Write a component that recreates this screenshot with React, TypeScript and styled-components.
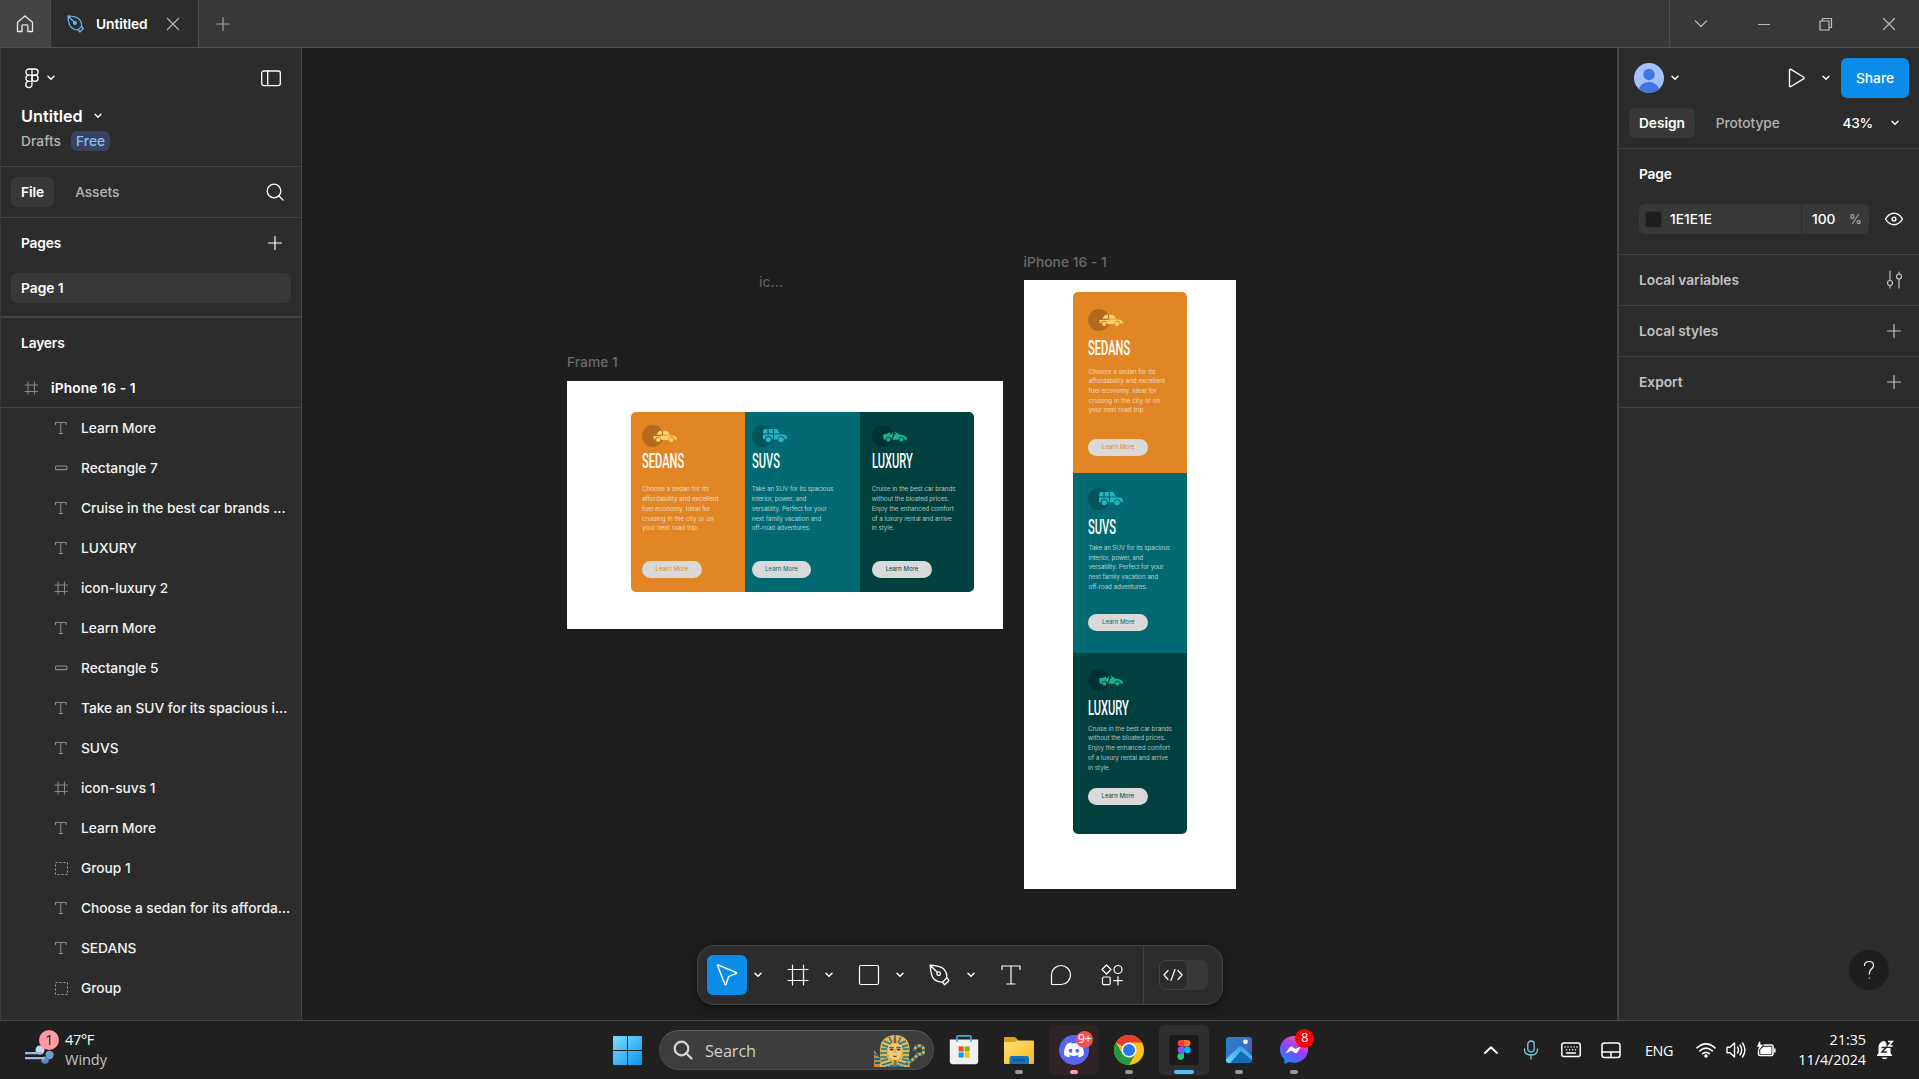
import React from "react";
import styled, { createGlobalStyle } from "styled-components";

const GlobalStyle = createGlobalStyle`
  *, *::before, *::after { box-sizing: border-box; }
  html, body { margin: 0; padding: 0; background: #1e1e1e; overflow: hidden; }
  body { font-family: Inter, "Liberation Sans", sans-serif; font-size: 13.75px; color: #fff; }
  svg { display: block; flex: none; }
`;

const line = "#444444";
const panel = "#2c2c2c";

const Screen = styled.div`
  width: 1919px;
  height: 1079px;
  display: flex;
  flex-direction: column;
  overflow: hidden;
`;

/* ---------- title bar ---------- */
const TitleBar = styled.header`
  height: 48px;
  flex: none;
  display: flex;
  background: #383838;
  border-bottom: 1px solid #4e4e4e;
`;
const HomeTab = styled.div`
  width: 51px;
  display: flex;
  align-items: center;
  justify-content: center;
  background: #444;
  border-right: 1px solid #4e4e4e;
`;
const FileTab = styled.div`
  width: 148px;
  display: flex;
  align-items: center;
  padding-left: 16px;
  background: ${panel};
  border-right: 1px solid #4e4e4e;
  font-weight: 600;
  letter-spacing: -0.005em;
  & > span { width: 70px; margin-left: 11px; }
`;
const NewTab = styled.div`
  width: 48px;
  display: flex;
  align-items: center;
  justify-content: center;
`;
const WindowControls = styled.div`
  margin-left: auto;
  width: 250px;
  border-left: 1px solid #4e4e4e;
  display: grid;
  grid-template-columns: 62px 63px 62px 63px;
  align-items: center;
  justify-items: center;
`;

/* ---------- workspace ---------- */
const Workspace = styled.div`
  flex: 1;
  min-height: 0;
  display: flex;
  border-bottom: 1px solid #464646;
`;
const LeftPanel = styled.aside`
  width: 302px;
  flex: none;
  background: ${panel};
  border-left: 1px solid #3a3a3a;
  border-right: 1px solid ${line};
  display: flex;
  flex-direction: column;
`;
const FileHeader = styled.section`
  height: 119px;
  border-bottom: 1px solid ${line};
  padding: 14px 20px 0;
`;
const MenuRow = styled.div`
  height: 32px;
  display: flex;
  align-items: center;
  gap: 8px;
  padding-left: 4px;
  & > :last-child { margin-left: auto; }
`;
const FileName = styled.div`
  margin-top: 12px;
  height: 20px;
  display: flex;
  align-items: center;
  gap: 11px;
  font-size: 16.25px;
  font-weight: 600;
`;
const FileMeta = styled.div`
  margin-top: 5px;
  height: 20px;
  display: flex;
  align-items: center;
  gap: 10px;
  color: #b3b3b3;
  font-weight: 480;
  letter-spacing: 0.005em;
`;
const FreeBadge = styled.span`
  height: 20px;
  width: 39px;
  border-radius: 6px;
  background: #394360;
  color: #7cc4f8;
  display: flex;
  align-items: center;
  justify-content: center;
`;
const TabRow = styled.div`
  height: 51px;
  border-bottom: 1px solid ${line};
  display: flex;
  align-items: center;
  padding: 0 16px 0 10px;
  & > svg { margin-left: auto; }
`;
const Tab = styled.div<{ $active?: boolean }>`
  height: 30px;
  padding: 0 10px;
  border-radius: 6px;
  display: flex;
  align-items: center;
  margin-right: 11px;
  letter-spacing: -0.005em;
  background: ${(p) => (p.$active ? "#383838" : "transparent")};
  color: ${(p) => (p.$active ? "#fff" : "#b3b3b3")};
  font-weight: ${(p) => (p.$active ? 600 : 480)};
`;
const SectionHead = styled.div`
  height: 50px;
  padding: 0 16px 0 20px;
  display: flex;
  align-items: center;
  justify-content: space-between;
  font-weight: 600;
  letter-spacing: -0.01em;
`;
const PageItem = styled.div`
  margin: 5px 10px 13px;
  height: 30px;
  border-radius: 6px;
  background: #383838;
  padding-left: 10px;
  display: flex;
  align-items: center;
  font-weight: 600;
`;
const Layers = styled.section`
  border-top: 2px solid ${line};
`;
const LayerRow = styled.div<{ $root?: boolean }>`
  height: 40px;
  display: flex;
  align-items: center;
  padding-left: ${(p) => (p.$root ? 20 : 50)}px;
  gap: 10px;
  border-bottom: ${(p) => (p.$root ? `1px solid ${line}` : "0")};
  font-weight: ${(p) => (p.$root ? 600 : 500)};
  letter-spacing: ${(p) => (p.$root ? "0.01em" : "-0.002em")};
  color: ${(p) => (p.$root ? "#fff" : "#f2f2f2")};
  white-space: nowrap;
`;

/* ---------- canvas ---------- */
const Canvas = styled.main`
  flex: 1;
  position: relative;
  background: #1e1e1e;
  overflow: hidden;
`;
const CanvasLabel = styled.div<{ $x: number; $y: number; $dim?: boolean }>`
  position: absolute;
  left: ${(p) => p.$x}px;
  top: ${(p) => p.$y}px;
  line-height: 20px;
  font-weight: 480;
  letter-spacing: 0.05px;
  color: ${(p) => (p.$dim ? "#5a5a5a" : "#6a6a6a")};
  white-space: nowrap;
`;
const Artboard = styled.div<{ $x: number; $y: number; $w: number; $h: number; $pad: string }>`
  position: absolute;
  left: ${(p) => p.$x}px;
  top: ${(p) => p.$y}px;
  width: ${(p) => p.$w}px;
  height: ${(p) => p.$h}px;
  padding: ${(p) => p.$pad};
  background: #fff;
`;
const CardSet = styled.div<{ $column?: boolean }>`
  display: grid;
  grid-template-columns: ${(p) => (p.$column ? "minmax(0, 1fr)" : "repeat(3, minmax(0, 1fr))")};
  grid-template-rows: ${(p) => (p.$column ? "repeat(3, minmax(0, 1fr))" : "minmax(0, 1fr)")};
  width: ${(p) => (p.$column ? 114.3 : 343)}px;
  height: ${(p) => (p.$column ? 542 : 180.8)}px;
  border-radius: 5px;
  overflow: hidden;
`;
const Card = styled.article<{ $bg: string; $left: number; $top: number }>`
  background: ${(p) => p.$bg};
  padding: ${(p) => p.$top}px 0 0 ${(p) => p.$left}px;
`;
const CardTitle = styled.div<{ $gap: number }>`
  margin-top: ${(p) => p.$gap}px;
  height: 14px;
  font: 500 20.4px/14px Roboto, "Liberation Sans", sans-serif;
  transform: scaleX(0.545);
  transform-origin: 0 50%;
  white-space: nowrap;
`;
const CardText = styled.div<{ $gap: number; $shift: number; $spacing: number }>`
  margin: ${(p) => p.$gap}px 0 0 ${(p) => p.$shift}px;
  height: 48.4px;
  font-size: 6.3px;
  line-height: 9.68px;
  letter-spacing: ${(p) => p.$spacing}px;
  color: rgba(255, 255, 255, 0.68);
  white-space: nowrap;
`;
const CardButton = styled.div<{ $gap: number; $color: string; $shift: number }>`
  margin: ${(p) => p.$gap}px 0 0 ${(p) => p.$shift}px;
  width: 59.6px;
  height: 16.8px;
  border-radius: 9px;
  background: #d9d9d9;
  color: ${(p) => p.$color};
  font-size: 6px;
  line-height: 16px;
  text-align: center;
`;

/* ---------- toolbar ---------- */
const Toolbar = styled.div`
  position: absolute;
  left: 395px;
  top: 897px;
  width: 526px;
  height: 60px;
  border-radius: 17px;
  background: ${panel};
  border: 1px solid #434343;
  box-shadow: 0 3px 8px rgba(0, 0, 0, 0.5);
  display: flex;
  align-items: center;
  padding-left: 9px;
`;
const ToolGroup = styled.div`
  width: 71px;
  flex: none;
  display: flex;
  align-items: center;
`;
const Tool = styled.div<{ $active?: boolean }>`
  width: 40px;
  height: 40px;
  flex: none;
  border-radius: 6px;
  background: ${(p) => (p.$active ? "#0c8ce9" : "transparent")};
  display: flex;
  align-items: center;
  justify-content: center;
`;
const ToolMenu = styled.div`
  width: 21px;
  display: flex;
  justify-content: center;
`;
const SingleTools = styled.div`
  display: flex;
  gap: 10.3px;
`;
const ModeArea = styled.div`
  height: 58px;
  margin-left: 11px;
  padding-left: 15px;
  border-left: 1px solid #434343;
  display: flex;
  align-items: center;
`;
const ModeTrack = styled.div`
  width: 49px;
  height: 30px;
  border-radius: 7px;
  background: #383838;
`;
const ModeKnob = styled.div`
  width: 29px;
  height: 30px;
  border-radius: 7px;
  background: ${panel};
  border: 1px solid #424242;
  display: flex;
  align-items: center;
  justify-content: center;
`;

/* ---------- right panel ---------- */
const RightPanel = styled.aside`
  position: relative;
  width: 302px;
  flex: none;
  background: ${panel};
  border-left: 2px solid ${line};
`;
const UserRow = styled.div`
  height: 60px;
  display: flex;
  align-items: center;
  padding: 0 10px 0 15px;
`;
const Spacer = styled.div<{ $w?: number }>`
  width: ${(p) => p.$w ?? 0}px;
  flex: ${(p) => (p.$w ? "none" : "1")};
`;
const ShareButton = styled.div`
  width: 68px;
  height: 40px;
  border-radius: 6px;
  background: #0c8ce9;
  display: flex;
  align-items: center;
  justify-content: center;
  font-weight: 500;
`;
const ModeTabs = styled.div`
  height: 41px;
  padding: 0 20px 11px 10px;
  border-bottom: 1px solid ${line};
  display: flex;
  align-items: center;
`;
const Zoom = styled.div`
  margin-left: auto;
  display: flex;
  align-items: center;
  gap: 18px;
  font-weight: 500;
  letter-spacing: -0.02em;
`;
const PageSection = styled.section`
  height: 106px;
  border-bottom: 1px solid ${line};
`;
const FillRow = styled.div`
  margin-top: 5px;
  padding: 0 11px 0 20px;
  display: flex;
  align-items: center;
  justify-content: space-between;
`;
const FillField = styled.div`
  width: 230px;
  height: 30px;
  border-radius: 6px;
  background: #383838;
  display: grid;
  grid-template-columns: 163px 36px 31px;
  align-items: center;
  font-weight: 500;
  overflow: hidden;
`;
const FillHex = styled.div`
  height: 30px;
  display: flex;
  align-items: center;
  gap: 8px;
  padding-left: 6px;
  border-right: 1px solid #2c2c2c;
`;
const Swatch = styled.span`
  width: 17px;
  height: 17px;
  border-radius: 3px;
  background: #1e1e1e;
  border: 1px solid #2f2f2f;
`;
const FillPct = styled.div<{ $muted?: boolean }>`
  padding-left: ${(p) => (p.$muted ? 11 : 10)}px;
  color: ${(p) => (p.$muted ? "#a9a9a9" : "#fff")};
  font-size: ${(p) => (p.$muted ? 13 : 13.75)}px;
`;
const PropertyRow = styled.div`
  height: 51px;
  padding: 0 15px 0 20px;
  border-bottom: 1px solid ${line};
  display: flex;
  align-items: center;
  justify-content: space-between;
  color: #c2c2c2;
  font-weight: 570;
  letter-spacing: 0;
`;
const HelpButton = styled.div`
  position: absolute;
  right: 30px;
  bottom: 30px;
  width: 40px;
  height: 40px;
  border-radius: 50%;
  background: #1e1e1e;
  display: flex;
  align-items: center;
  justify-content: center;
`;

/* ---------- taskbar ---------- */
const Taskbar = styled.footer`
  height: 58px;
  flex: none;
  background: #202020;
  display: flex;
  align-items: center;
  font-family: "Open Sans", "Noto Sans", sans-serif;
`;
const Weather = styled.div`
  width: 613px;
  padding-left: 24px;
  display: flex;
  align-items: center;
  gap: 9px;
`;
const WeatherText = styled.div`
  font-size: 14.6px;
  line-height: 20px;
  letter-spacing: -0.4px;
  padding-bottom: 2px;
  & > div:last-child { color: #c4c4c4; letter-spacing: -0.1px; }
`;
const SearchBox = styled.div`
  margin-left: 17px;
  width: 275px;
  height: 40px;
  border-radius: 20px;
  background: #3d3d3d;
  border: 1px solid #4b4b4b;
  border-top-color: #5c5c5c;
  display: flex;
  align-items: center;
  padding: 0 8px 0 13px;
  font-size: 16.4px;
  letter-spacing: -0.15px;
  color: #d0d0d0;
  & > span { flex: 1; margin-left: 12px; }
`;
const Apps = styled.div`
  margin-left: 5px;
  display: flex;
  gap: 5px;
`;
const AppTile = styled.div<{ $bg?: string }>`
  position: relative;
  width: 50px;
  height: 50px;
  border-radius: 6px;
  background: ${(p) => p.$bg ?? "transparent"};
  display: flex;
  align-items: center;
  justify-content: center;
`;
const Indicator = styled.span<{ $w: number; $c: string }>`
  position: absolute;
  bottom: 1px;
  left: calc(50% - ${(p) => p.$w / 2}px);
  width: ${(p) => p.$w}px;
  height: 4px;
  border-radius: 2px;
  background: ${(p) => p.$c};
`;
const Badge = styled.span<{ $bg: string; $size: number; $x: number; $y: number; $fg: string; $fs: number }>`
  position: absolute;
  left: ${(p) => p.$x}px;
  top: ${(p) => p.$y}px;
  width: ${(p) => p.$size}px;
  height: ${(p) => p.$size}px;
  border-radius: 50%;
  background: ${(p) => p.$bg};
  color: ${(p) => p.$fg};
  font-size: ${(p) => p.$fs}px;
  line-height: ${(p) => p.$size - 1}px;
  text-align: center;
  letter-spacing: -0.5px;
`;
const WeatherIcon = styled.div`
  position: relative;
  width: 32px;
  height: 34px;
`;
const Tray = styled.div`
  margin-left: auto;
  height: 58px;
  display: grid;
  grid-template-columns: 40px 40px 40px 40px 60px 30px 30px 30px 85px 53px;
  align-items: center;
  justify-items: center;
  font-size: 14.4px;
  letter-spacing: -0.4px;
`;
const Language = styled.span`
  padding-right: 4px;
`;
const Clock = styled.div`
  justify-self: end;
  text-align: right;
  line-height: 20px;
  white-space: nowrap;
  letter-spacing: -0.05px;
`;
const Bell = styled.div`
  justify-self: start;
  padding-left: 10px;
`;

/* ---------- icons ---------- */
const Stroke = ({ w, h, d, c = "#fff", s = 1.2, children }: { w: number; h: number; d?: string; c?: string; s?: number; children?: React.ReactNode }) => (
  <svg width={w} height={h} viewBox={`0 0 ${w} ${h}`} fill="none" stroke={c} strokeWidth={s} strokeLinecap="round" strokeLinejoin="round">
    {d && <path d={d} />}
    {children}
  </svg>
);
const Chevron = ({ s = 1.4 }: { s?: number }) => <Stroke w={8} h={6} s={s} d="M1 1.3 4 4.3 7 1.3" />;
const Plus = ({ c = "#fff" }: { c?: string }) => <Stroke w={20} h={20} c={c} d="M10 3.5v13M3.5 10h13" />;
const penPath = "M1.2 1.2C6 1.500 11.500 2.200 14.500 4.800Q18.200 8.500 17.800 13.800L13.500 18.200Q7.500 18 4.500 14.500Q1.800 11 1.200 1.200zM17.800 13.800l2.200 2.700-4.300 4.200-2.200-2.500M1.200 1.200 8.300 8.300";
const Pen = () => (
  <Stroke w={22} h={22} s={1.3} d={penPath}>
    <circle cx="9.7" cy="9.7" r="1.8" />
  </Stroke>
);

const GridIcon = () => <Stroke w={20} h={20} c="#858585" s={1.1} d="M7 4v12M13.5 4v12M4 7h12.5M4 13.5h12.5" />;
const TextIcon = () => <Stroke w={20} h={20} c="#8c8c8c" s={1.1} d="M4.5 6.5V4.5h10.6v2M9.8 4.5v11M8 15.5h3.6" />;
const RectIcon = () => (
  <Stroke w={20} h={20} c="#8c8c8c" s={1.1}>
    <rect x="4.5" y="8" width="11.4" height="3.6" rx="1" />
  </Stroke>
);
const GroupIcon = () => (
  <svg width="20" height="20" viewBox="0 0 20 20" fill="none" stroke="#a2a2a2" strokeWidth="1" strokeDasharray="2 2">
    <path d="M4.5 4.5h12M16.5 4.5v12M16.5 16.5h-12M4.5 16.5v-12" />
  </svg>
);
const layerIcons = { grid: GridIcon, text: TextIcon, rect: RectIcon, group: GroupIcon };

const layers: [keyof typeof layerIcons, string][] = [
  ["text", "Learn More"],
  ["rect", "Rectangle 7"],
  ["text", "Cruise in the best car brands ..."],
  ["text", "LUXURY"],
  ["grid", "icon-luxury 2"],
  ["text", "Learn More"],
  ["rect", "Rectangle 5"],
  ["text", "Take an SUV for its spacious i..."],
  ["text", "SUVS"],
  ["grid", "icon-suvs 1"],
  ["text", "Learn More"],
  ["group", "Group 1"],
  ["text", "Choose a sedan for its afforda..."],
  ["text", "SEDANS"],
  ["group", "Group"],
];

type Kind = "sedan" | "suv" | "luxury";
const CarIcon = ({ kind }: { kind: Kind }) => (
  <svg width="36" height="22" viewBox="0 0 36 22">
    <circle cx="10.9" cy="11" r="10.9" fill="#000" fillOpacity={kind === "luxury" ? 0.25 : 0.2} />
    {kind === "sedan" && (
      <g fill="#ffd06b">
        <path d="M14.500 9.800 16.500 6.500q.5-.8 1.500-.8h2v4.100zM21 5.700h3q1 0 1.700.7l2.600 3.400H21z" />
        <path d="M10.900 11h9v3.800h-1q-.3-3-2.900-3t-2.900 2.800l-2-.5.8-1.500zM20.900 10.400h9.600q4.200.8 4.300 2.800v1.300h-2.700q-.3-3-2.900-3t-2.900 3.500h-6.800v-4.600z" />
        <circle cx="16.200" cy="14.700" r="2.200" />
        <circle cx="29.100" cy="14.700" r="2.200" />
      </g>
    )}
    {kind === "suv" && (
      <g fill="#22b4c2">
        <path d="M11 8.500V6q.3-2 2-2h2.500v4.500zM16.600 4h4.200v4.500h-4.200zM22 4h2.300q1 0 1.600 1l1.700 3.500H22z" />
        <path d="M11 9.500h10v5h-1.100q-.5-3.400-3.600-3.400t-3.600 3.400L11 14zM22 9.500h8.800q4 .4 4.100 2.200v2.300h-2.300q-.5-3-3.600-3t-3.600 3.500H22z" />
        <circle cx="16.300" cy="14.600" r="2.700" />
        <circle cx="29" cy="14.600" r="2.700" />
      </g>
    )}
    {kind === "luxury" && (
      <g fill="#18b08f">
        <path d="M11 9.600 16 8.500l1.200-.9 1 .4-.4 1.500 2.100-.7.4-1.200.8.3-.5 3.600-1.100 2.700q-.8-2.700-3.500-2.400-2.400.4-2.400 3l-1.800-.3z" />
        <path d="M20.400 14.800 22 10.600l1.900-2.100-1.500-1.200.6-.7 4.200 2.800q7.300.5 7.800 4v1.400h-2.600q-.4-3-3-3t-3 3z" />
        <circle cx="16.400" cy="14.600" r="2.100" />
        <circle cx="29.300" cy="14.600" r="2.100" />
      </g>
    )}
  </svg>
);

const cars: Record<Kind, { title: string; color: string; lines: string[]; spacing: number }> = {
  sedan: {
    title: "SEDANS",
    color: "#e28625",
    lines: ["Choose a sedan for its", "affordability and excellent", "fuel economy. Ideal for", "cruising in the city or on", "your next road trip."],
    spacing: 0,
  },
  suv: {
    title: "SUVS",
    color: "#006971",
    lines: ["Take an SUV for its spacious", "interior, power, and", "versatility. Perfect for your", "next family vacation and", "off-road adventures."],
    spacing: -0.13,
  },
  luxury: {
    title: "LUXURY",
    color: "#004140",
    lines: ["Cruise in the best car brands", "without the bloated prices.", "Enjoy the enhanced comfort", "of a luxury rental and arrive", "in style."],
    spacing: -0.07,
  },
};

type CarCardProps = { kind: Kind; left: number; top: number; head: number; text: number; button: number; shift?: number; btnShift?: number };
const CarCard = ({ kind, left, top, head, text, button, shift = 0, btnShift = 0 }: CarCardProps) => {
  const car = cars[kind];
  return (
    <Card $bg={car.color} $left={left} $top={top}>
      <CarIcon kind={kind} />
      <CardTitle $gap={head - top - 22}>{car.title}</CardTitle>
      <CardText $gap={text - head - 14} $shift={shift} $spacing={car.spacing}>
        {car.lines.map((t) => (
          <div key={t}>{t}</div>
        ))}
      </CardText>
      <CardButton $gap={button - text - 48.4} $color={car.color} $shift={btnShift}>Learn More</CardButton>
    </Card>
  );
};

const Pharaoh = () => (
  <svg width="52" height="33" viewBox="0 0 52 33">
    <path d="M1 16 7 24l4 9H1z" fill="#c98b32" />
    <path d="M1 20l5 2M1 25h7M2 29h8" stroke="#176a85" strokeWidth="1.8" />
    <path d="M7 33Q8 27 7 22 6 9 11 5q5-4 11-4 7 0 11 4 5 5 3 17-1 6 1 11z" fill="#e2b553" />
    <path d="M11 7l7 3M9 11l6 2M8 15h6M7 19h7M7 23h7M8 27l7-2M33 7l-7 3M35 11l-6 2M36 15h-6M36 19h-6M36 23h-6M36 27l-7-2M16 3l3 6M28 3l-3 6M9 31l10-3M35 31l-10-3M22 1v5" stroke="#1b7894" strokeWidth="1.500" />
    <path d="M15 12q7-5 14 0l-1 9q-2 5-6 6-4-1-6-6z" fill="#f1cd78" />
    <path d="M16 14q2-2 5 0M23 14q3-2 5 0M20 22q2 1 4 0" stroke="#573a1b" fill="none" />
    <ellipse cx="18.700" cy="15.600" rx="1.800" ry="1" fill="#24323a" />
    <ellipse cx="25.600" cy="15.600" rx="1.800" ry="1" fill="#24323a" />
    <path d="M22 15v4" stroke="#c98f3d" />
    <path d="M22 4q2 1 1 5h-2q-1-4 1-5" fill="#c63b24" />
    <path d="M12 33q10-7 20 0z" fill="#1b7894" />
    <path d="M15 32q7-4 14 0" stroke="#e2b553" fill="none" />
    <path d="M20.700 26h2.800v6h-2.800z" fill="#a86b25" />
    <path d="M33 30q8-4 12-10 6 1 6-4-1-5-6-4-3 1-4 5" stroke="#d9ad50" strokeWidth="3" fill="none" />
    <path d="M33 30q8-4 12-10 6 1 6-4-1-5-6-4-3 1-4 5" stroke="#1b7894" strokeWidth="3" strokeDasharray="2 2.600" fill="none" />
  </svg>
);

const StoreIcon = () => (
  <svg width="30" height="30" viewBox="0 0 30 30">
    <path d="M.8 4.500h28.400V26q0 3.200-3.200 3.200H4Q.8 29.200.8 26z" fill="#f0f0f0" />
    <path d="M8 7V1.800Q8 .9 8.900.9h12.200q.9 0 .9.9V7" fill="none" stroke="#2bb5ef" strokeWidth="1.600" />
    <path d="M9.600 11.400h5.100v5.100H9.600z" fill="#f25022" />
    <path d="M15.600 11.400h5.100v5.100h-5.100z" fill="#7fba00" />
    <path d="M9.600 17.400h5.100v5.100H9.600z" fill="#00a4ef" />
    <path d="M15.600 17.400h5.100v5.100h-5.100z" fill="#ffb900" />
  </svg>
);
const FolderIcon = () => (
  <svg width="30" height="28" viewBox="0 0 30 28">
    <defs>
      <linearGradient id="fold" x1="0" y1="0" x2="1" y2="1"><stop stopColor="#ffe07a" /><stop offset="1" stopColor="#f9b916" /></linearGradient>
    </defs>
    <path d="M0 7V2Q0 1 1 1h9q1 0 2 1l2 2v4z" fill="#dfa00f" />
    <path d="M0 6h10q1.500 0 2.500-1l.8-.6H29q1 0 1 1V27q0 .9-1 .9H1q-1 0-1-1z" fill="url(#fold)" />
    <path d="M5.500 28v-6q0-2 2-2H23q2 0 2 2v6z" fill="#1273bd" />
    <path d="M9 24h12" stroke="#0c4d87" strokeWidth="1.400" />
  </svg>
);
const DiscordIcon = () => (
  <svg width="30" height="30" viewBox="0 0 30 30">
    <circle cx="15" cy="15" r="15" fill="#5865f2" />
    <g transform="translate(5 5) scale(.83)">
      <path fill="#fff" d="M20.300 4.400A19.800 19.800 0 0 0 15.400 2.900l-.6 1.300a18.300 18.300 0 0 0-5.500 0l-.6-1.300c-1.700.3-3.400.8-4.900 1.500C.5 9-.3 13.600.1 18.100a19.900 19.900 0 0 0 6 3l1.300-2-1.900-.9.4-.3c3.900 1.800 8.200 1.800 12.100 0l.4.3-1.900.9 1.300 2a19.800 19.800 0 0 0 6-3c.5-5.200-.8-9.700-3.500-13.700zM8 15.300c-1.200 0-2.200-1.100-2.200-2.400S6.800 10.500 8 10.500s2.200 1.100 2.200 2.400-1 2.400-2.200 2.400zm8 0c-1.200 0-2.200-1.100-2.200-2.400s1-2.400 2.200-2.400 2.200 1.100 2.200 2.400-1 2.400-2.200 2.400z" />
    </g>
  </svg>
);
const ChromeIcon = () => (
  <svg width="30" height="30" viewBox="0 0 30 30">
    <circle cx="15" cy="15" r="15" fill="#fbc116" />
    <path d="M15 15 2 7.500A15 15 0 0 1 28 7.500H15z" fill="#e33b2e" />
    <path d="M2 7.500A15 15 0 0 0 15 30l6.500-11.300L15 15 8.500 18.700z" fill="#229a45" />
    <circle cx="15" cy="15" r="7.500" fill="#fff" />
    <circle cx="15" cy="15" r="6" fill="#2979ed" />
  </svg>
);
const FigmaApp = () => (
  <svg width="30" height="30" viewBox="0 0 30 30">
    <rect width="30" height="30" rx="2" fill="#1b1b1b" />
    <path d="M15 5h-3a3.300 3.300 0 0 0 0 6.600h3z" fill="#ff3b2e" />
    <path d="M15 5h3.200a3.300 3.300 0 0 1 0 6.600H15z" fill="#ff7237" />
    <path d="M15 11.600h-3a3.300 3.300 0 0 0 0 6.600h3z" fill="#874fff" />
    <circle cx="18.300" cy="14.900" r="3.300" fill="#00b6ff" />
    <path d="M15 18.200h-3.200a3.300 3.300 0 1 0 3.200 3.300z" fill="#24cb71" />
  </svg>
);
const PhotosIcon = () => (
  <svg width="26" height="26" viewBox="0 0 26 26">
    <defs>
      <linearGradient id="ph" x1="0" y1="0" x2="1" y2="1"><stop stopColor="#1689d8" /><stop offset=".6" stopColor="#4a67b8" /><stop offset="1" stopColor="#1f5fb0" /></linearGradient>
      <linearGradient id="ph2" x1="0" y1="1" x2="1" y2="0"><stop stopColor="#5ae0fa" /><stop offset="1" stopColor="#2c9be4" /></linearGradient>
      <clipPath id="phc"><rect width="26" height="26" rx="3" /></clipPath>
    </defs>
    <g clipPath="url(#phc)">
      <rect width="26" height="26" fill="url(#ph)" />
      <path d="M5 26 14 13l12 11v2z" fill="#1569b5" />
      <path d="M0 22 12.500 10q2-1.500 4 0L26 19v4l-11-9L4 26H0z" fill="url(#ph2)" />
      <circle cx="19.500" cy="4.800" r="2.400" fill="#eef3ff" />
    </g>
  </svg>
);
const MessengerIcon = () => (
  <svg width="30" height="30" viewBox="0 0 30 30">
    <defs>
      <linearGradient id="ms" x1=".2" y1="1" x2=".8" y2="0"><stop stopColor="#0a90ff" /><stop offset=".55" stopColor="#9a3cff" /><stop offset="1" stopColor="#ff6a70" /></linearGradient>
    </defs>
    <path d="M15 1C7 1 1 6.800 1 14.500c0 4 1.600 7.300 4.300 9.700l.2 4.800 4.600-2q2.300.8 4.900.8c8 0 14-5.600 14-13.300S23 1 15 1z" fill="url(#ms)" />
    <path d="m6.500 18.500 4.300-6.600q1-1.200 2.300-.3l3.300 2.500 6.100-3.100-4.300 6.600q-1 1.200-2.300.3l-3.300-2.500z" fill="#fff" />
  </svg>
);

export default function App() {
  return (
    <Screen>
      <GlobalStyle />
      <TitleBar>
        <HomeTab>
          <Stroke w={18} h={18} s={1.3} c="#e8e8e8" d="M1.500 7.200 9 1l7.500 6.200v9.300h-4.600v-5.700q0-1-1-1H7q-1 0-1 1v5.700H1.500z" />
        </HomeTab>
        <FileTab>
          <Stroke w={18} h={18} s={1.5} c="#6cb6ee">
            <g transform="scale(.82)"><path d={penPath} /><circle cx="9.700" cy="9.700" r="1.700" fill="#6cb6ee" /></g>
          </Stroke>
          <span>Untitled</span>
          <Stroke w={14} h={14} c="#b8b8b8" d="M1.500 1.500l11 11M12.500 1.500l-11 11" />
        </FileTab>
        <NewTab><Plus c="#a0a0a0" /></NewTab>
        <WindowControls>
          <Stroke w={14} h={8} c="#b8b8b8" d="M1.500 1 7 6.500 12.500 1" />
          <Stroke w={14} h={4} c="#b8b8b8" d="M1.500 2.500h11" />
          <Stroke w={14} h={14} c="#c0c0c0" d="M1 4h9v9H1zM3.500 4V1.500h9v9H10" />
          <Stroke w={14} h={14} c="#b8b8b8" d="M1.500 1.500l11 11M12.500 1.500l-11 11" />
        </WindowControls>
      </TitleBar>

      <Workspace>
        <LeftPanel>
          <FileHeader>
            <MenuRow>
              <Stroke w={14} h={21} s={1.3} d="M7 1H4a3 3 0 0 0 0 6.200h3zM7 1h3a3 3 0 0 1 0 6.200H7zM7 7.200H4a3 3 0 0 0 0 6.200h3zM7 13.400H4a3.100 3.100 0 1 0 3 3.200z">
                <circle cx="10" cy="10.300" r="3.100" />
              </Stroke>
              <Chevron />
              <Stroke w={20} h={17} s={1.3}>
                <rect x=".7" y="1" width="18.600" height="14.600" rx="2" />
                <path d="M6.700 1v14.600" />
              </Stroke>
            </MenuRow>
            <FileName>Untitled <Chevron /></FileName>
            <FileMeta>Drafts <FreeBadge>Free</FreeBadge></FileMeta>
          </FileHeader>
          <TabRow>
            <Tab $active>File</Tab>
            <Tab>Assets</Tab>
            <Stroke w={20} h={20} s={1.3} d="M13.800 13.800 18 18"><circle cx="9" cy="9" r="6.800" /></Stroke>
          </TabRow>
          <SectionHead>Pages <Plus /></SectionHead>
          <PageItem>Page 1</PageItem>
          <Layers>
            <SectionHead>Layers</SectionHead>
            <LayerRow $root><GridIcon />iPhone 16 - 1</LayerRow>
            {layers.map(([kind, name], i) => {
              const Icon = layerIcons[kind];
              return <LayerRow key={i}><Icon />{name}</LayerRow>;
            })}
          </Layers>
        </LeftPanel>

        <Canvas>
          <CanvasLabel $x={457} $y={224} $dim>ic...</CanvasLabel>
          <CanvasLabel $x={265} $y={304}>Frame 1</CanvasLabel>
          <Artboard $x={265.3} $y={332.5} $w={435.3} $h={248.5} $pad="31px 0 0 63.700px">
            <CardSet>
              <CarCard kind="sedan" left={11} top={13} head={42.6} text={74} button={150} />
              <CarCard kind="suv" left={6.4} top={13} head={42.6} text={74} button={150} />
              <CarCard kind="luxury" left={12.5} top={13} head={42.6} text={74} button={150} shift={-0.5} />
            </CardSet>
          </Artboard>
          <CanvasLabel $x={721.5} $y={204}>iPhone 16 - 1</CanvasLabel>
          <Artboard $x={721.7} $y={232.3} $w={212.3} $h={609.2} $pad="11.700px 0 0 49.300px">
            <CardSet $column>
              <CarCard kind="sedan" left={15.5} top={17} head={49} text={75.6} button={147.3} />
              <CarCard kind="suv" left={15.5} top={15.5} head={47.5} text={71.3} button={141.3} />
              <CarCard kind="luxury" left={15.5} top={15.5} head={47.8} text={71.5} button={134.5} shift={-0.5} btnShift={-0.5} />
            </CardSet>
          </Artboard>

          <Toolbar>
            <ToolGroup>
              <Tool $active>
                <Stroke w={22} h={22} s={1.4} d="M1.500 1.600Q1 .6 2.200 1L20 8.400q1.300.6 0 1.200l-6.500 2.600q-.8.3-1.100 1l-2.300 7q-.5 1.200-1.200 0z" />
              </Tool>
              <ToolMenu><Chevron s={1.5} /></ToolMenu>
            </ToolGroup>
            <ToolGroup>
              <Tool><Stroke w={22} h={22} d="M5.500 1v20M16.500 1v20M1 5.500h20M1 16.500h20" /></Tool>
              <ToolMenu><Chevron s={1.5} /></ToolMenu>
            </ToolGroup>
            <ToolGroup>
              <Tool><Stroke w={22} h={22}><rect x="1.500" y="1.500" width="19" height="19" rx="1.500" /></Stroke></Tool>
              <ToolMenu><Chevron s={1.5} /></ToolMenu>
            </ToolGroup>
            <ToolGroup>
              <Tool><Pen /></Tool>
              <ToolMenu><Chevron s={1.5} /></ToolMenu>
            </ToolGroup>
            <SingleTools>
              <Tool><Stroke w={20} h={20} d="M1 4.500V1h18v3.500M10 1v18M6 19h8" /></Tool>
              <Tool><Stroke w={22} h={22} d="M1.500 20.500V11A9.500 9.500 0 1 1 11 20.500z" /></Tool>
              <Tool>
                <Stroke w={22} h={22} d="M5.500 1 10 5.500 5.500 10 1 5.500zM17 12.500v8.500M12.700 16.700h8.500">
                  <circle cx="17" cy="5.500" r="4" />
                  <rect x="1.500" y="13" width="7.700" height="7.700" rx="1.200" />
                </Stroke>
              </Tool>
            </SingleTools>
            <ModeArea>
              <ModeTrack>
                <ModeKnob><Stroke w={20} h={14} d="M5 2.500 1 7l4 4.500M15 2.500 19 7l-4 4.500M12 1.500 8 12.500" /></ModeKnob>
              </ModeTrack>
            </ModeArea>
          </Toolbar>
        </Canvas>

        <RightPanel>
          <UserRow>
            <svg width="30" height="30" viewBox="0 0 30 30">
              <defs><clipPath id="av"><circle cx="15" cy="15" r="15" /></clipPath></defs>
              <g clipPath="url(#av)">
                <rect width="30" height="30" fill="#a3c2fb" />
                <circle cx="15" cy="11.500" r="5.700" fill="#4376dd" />
                <ellipse cx="15" cy="26.500" rx="9.800" ry="7.500" fill="#4376dd" />
              </g>
            </svg>
            <Spacer $w={7} />
            <Chevron s={1.5} />
            <Spacer />
            <Stroke w={18} h={20} s={1.4} d="M1.500 2.200q0-1.500 1.400-.9L15.500 9q1.200 1 0 1.900L2.900 18.500q-1.400.8-1.400-.8z" />
            <Spacer $w={16} />
            <Chevron />
            <Spacer $w={11} />
            <ShareButton>Share</ShareButton>
          </UserRow>
          <ModeTabs>
            <Tab $active>Design</Tab>
            <Tab>Prototype</Tab>
            <Zoom>43% <Chevron /></Zoom>
          </ModeTabs>
          <PageSection>
            <SectionHead>Page</SectionHead>
            <FillRow>
              <FillField>
                <FillHex><Swatch />1E1E1E</FillHex>
                <FillPct>100</FillPct>
                <FillPct $muted>%</FillPct>
              </FillField>
              <Spacer />
              <Stroke w={28} h={16} s={1.4} d="M5.500 8q3.500-5.700 8.500-5.700T22.500 8q-3.500 5.700-8.500 5.700T5.500 8z"><circle cx="14" cy="8" r="1.900" /></Stroke>
            </FillRow>
          </PageSection>
          <PropertyRow>
            Local variables
            <Stroke w={20} h={20} c="#c2c2c2" d="M6 1v9.500M6 15.500V18M15 2v2M15 9v9"><circle cx="6" cy="13" r="2.500" /><circle cx="15" cy="6.500" r="2.500" /></Stroke>
          </PropertyRow>
          <PropertyRow>Local styles <Plus c="#c2c2c2" /></PropertyRow>
          <PropertyRow>Export <Plus c="#c2c2c2" /></PropertyRow>
          <HelpButton>
            <Stroke w={14} h={20} d="M2.500 5.500Q2.500 1.500 7 1.500t4.500 3.700q0 2-2.300 4Q7.300 11 7.300 14M7.300 18v.1" />
          </HelpButton>
        </RightPanel>
      </Workspace>

      <Taskbar>
        <Weather>
          <WeatherIcon>
            <svg width="32" height="34" viewBox="0 0 32 34">
              <circle cx="16" cy="17" r="4.500" fill="#c7d7ec" />
              <circle cx="25.500" cy="22" r="4.200" fill="#6f9cc8" />
              <circle cx="21" cy="27" r="3.800" fill="#5b8abb" />
              <path d="M1 20.200h17M1 25.200h20" stroke="#9bbbe0" strokeWidth="2.200" />
              <path d="M1 22.700h21" stroke="#202020" strokeWidth="1.400" />
            </svg>
            <Badge $bg="#ff9aa5" $fg="#222" $size={20} $x={15} $y={-3} $fs={14}>1</Badge>
          </WeatherIcon>
          <WeatherText><div>47°F</div><div>Windy</div></WeatherText>
        </Weather>
        <svg width="29" height="29" viewBox="0 0 29 29">
          <defs><linearGradient id="win" x1="0" y1="0" x2="1" y2="1"><stop stopColor="#7fdcff" /><stop offset="1" stopColor="#0b94ef" /></linearGradient></defs>
          <path d="M1 0h13v13.900H0V1q0-1 1-1zM15 0h13q1 0 1 1v12.900H15zM0 15h14v14H1q-1 0-1-1zM15 15h14v13q0 1-1 1H15z" fill="url(#win)" />
        </svg>
        <SearchBox>
          <Stroke w={20} h={20} s={2.2} c="#d6d6d6" d="M13 13l5.500 5.500"><circle cx="8.500" cy="8.500" r="6.800" /></Stroke>
          <span>Search</span>
          <Pharaoh />
        </SearchBox>
        <Apps>
          <AppTile><StoreIcon /></AppTile>
          <AppTile><FolderIcon /><Indicator $w={8} $c="#9a9a9a" /></AppTile>
          <AppTile $bg="#2e2425">
            <DiscordIcon />
            <Badge $bg="#ee5257" $fg="#fff" $size={17} $x={27} $y={5.5} $fs={12.5}>9+</Badge>
            <Indicator $w={8} $c="#ff99a4" />
          </AppTile>
          <AppTile><ChromeIcon /><Indicator $w={8} $c="#9a9a9a" /></AppTile>
          <AppTile $bg="#2f2f2f"><FigmaApp /><Indicator $w={20} $c="#4cc2ff" /></AppTile>
          <AppTile><PhotosIcon /><Indicator $w={8} $c="#9a9a9a" /></AppTile>
          <AppTile>
            <MessengerIcon />
            <Badge $bg="#fb0007" $fg="#fff" $size={19} $x={26} $y={4} $fs={12.5}>8</Badge>
            <Indicator $w={8} $c="#9a9a9a" />
          </AppTile>
        </Apps>
        <Tray>
          <Stroke w={14} h={8} s={1.9} d="M1 7 7 1.200 13 7" />
          <Stroke w={16} h={20} s={1.3} c="#74cde2" d="M1.500 9v1q.3 5 6.500 5t6.500-5V9M8 15v4"><rect x="4.800" y="1" width="6.400" height="11" rx="3.200" /></Stroke>
          <Stroke w={20} h={16} s={1.5}>
            <rect x=".8" y="1" width="18.400" height="13.500" rx="2" />
            <path d="M4 5h.1M7 5h.1M10 5h.1M13 5h.1M16 5h.1M5.500 7.800h.1M8.500 7.800h.1M11.500 7.800h.1M14.500 7.800h.1M5.500 11h9" strokeWidth="1.400" />
          </Stroke>
          <Stroke w={20} h={17} s={1.5}><rect x="1" y="1" width="18" height="14.500" rx="2.500" /><path d="M1 10h18M10 10v5.500" /></Stroke>
          <Language>ENG</Language>
          <Stroke w={20} h={16} s={1.6} d="M1 5.800q9-8 18 0M3.800 8.800q6.200-5.300 12.400 0M6.600 11.700q3.400-2.800 6.800 0"><circle cx="10" cy="14" r="1" fill="#fff" /></Stroke>
          <Stroke w={20} h={18} s={1.4} d="M1 6.300h3L8.500 2v14L4 11.700H1zM11.500 6q2 3 0 6M14 4q3.300 5 0 10M16.500 2q4.800 7 0 14" />
          <Stroke w={20} h={18} s={1.5}>
            <path d="M8 4h7.500q1.500 0 1.500 1.500v7.500q0 1.500-1.500 1.500H4q-1.500 0-1.500-1.500v-3M18.800 8v3" />
            <path d="M7.500 6.500h7.300v5.700H5V9z" fill="#fff" />
            <path d="M3.500 1 1.500 5.500h2L2.500 9 6.500 4h-2z" fill="#fff" strokeWidth=".8" />
          </Stroke>
          <Clock>21:35<br />11/4/2024</Clock>
          <Bell>
            <svg width="18" height="20" viewBox="0 0 18 20">
              <path d="M8.500 1Q2.500 1.500 2.500 7.500V13L1 15.300V16h15v-.7L14.500 13V8z" fill="#fff" />
              <path d="M5.500 17.500h6q-.8 1.700-3 1.700t-3-1.700" fill="#fff" />
              <path d="M10.500 0h7v8h-7z" fill="#202020" />
              <path d="M12 1.500h4.300L12.500 6h4.300" stroke="#fff" strokeWidth="1.500" fill="none" />
              <path d="M5.500 7.500h4.700L6 12h4.700" stroke="#202020" strokeWidth="1.500" fill="none" />
            </svg>
          </Bell>
        </Tray>
      </Taskbar>
    </Screen>
  );
}
